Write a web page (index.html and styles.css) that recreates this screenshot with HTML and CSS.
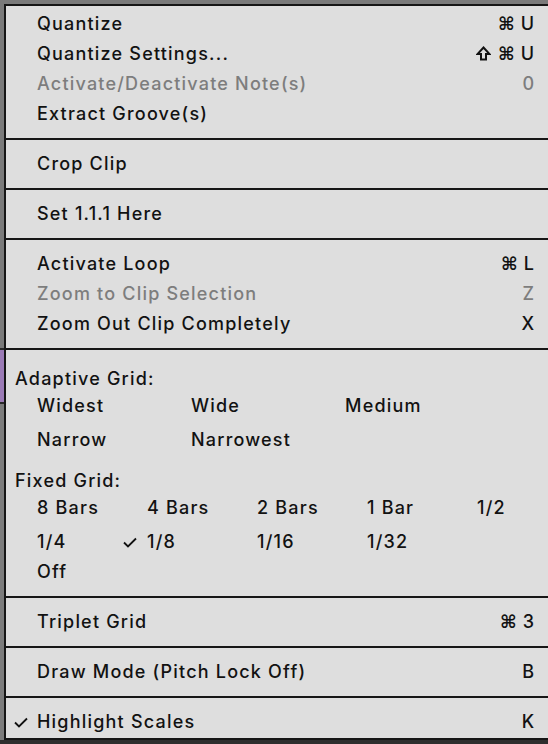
FILE: index.html
```html
<!DOCTYPE html>
<html>
<head>
<meta charset="utf-8">
<link rel="stylesheet" href="styles.css">
</head>
<body>
<div class="menu">
  <div class="item"><span class="label">Quantize</span><span class="key"><span class="sym">⌘</span>U</span></div>
  <div class="item"><span class="label">Quantize Settings...</span><span class="key"><svg class="shift" width="15" height="15" viewBox="0 0 15 15"><path d="M7.5 1.5 L13.5 8 H10 V13.5 H5 V8 H1.5 Z" fill="none" stroke="#121212" stroke-width="2" stroke-linejoin="miter"/></svg><span class="sym">⌘</span>U</span></div>
  <div class="item disabled"><span class="label">Activate/Deactivate Note(s)</span><span class="key">0</span></div>
  <div class="item"><span class="label">Extract Groove(s)</span></div>
  <div class="sep"></div>
  <div class="item"><span class="label">Crop Clip</span></div>
  <div class="sep"></div>
  <div class="item"><span class="label">Set 1.1.1 Here</span></div>
  <div class="sep"></div>
  <div class="item"><span class="label">Activate Loop</span><span class="key"><span class="sym">⌘</span>L</span></div>
  <div class="item disabled"><span class="label">Zoom to Clip Selection</span><span class="key">Z</span></div>
  <div class="item"><span class="label">Zoom Out Clip Completely</span><span class="key">X</span></div>
  <div class="sep sep-tight"></div>
  <div class="grid-section">
    <div class="heading">Adaptive Grid:</div>
    <div class="grid adaptive">
      <div class="cell">Widest</div>
      <div class="cell">Wide</div>
      <div class="cell">Medium</div>
      <div class="cell">Narrow</div>
      <div class="cell">Narrowest</div>
    </div>
    <div class="heading fixed-heading">Fixed Grid:</div>
    <div class="grid fixed">
      <div class="cell">8 Bars</div>
      <div class="cell">4 Bars</div>
      <div class="cell">2 Bars</div>
      <div class="cell">1 Bar</div>
      <div class="cell">1/2</div>
      <div class="cell">1/4</div>
      <div class="cell checked"><svg class="check" width="14" height="11" viewBox="0 0 14 11"><polyline points="1,5.5 5,9.5 13,1.5" fill="none" stroke="#111" stroke-width="1.8"/></svg>1/8</div>
      <div class="cell">1/16</div>
      <div class="cell">1/32</div>
    </div>
    <div class="cell off">Off</div>
  </div>
  <div class="sep"></div>
  <div class="item"><span class="label">Triplet Grid</span><span class="key"><span class="sym">⌘</span>3</span></div>
  <div class="sep"></div>
  <div class="item"><span class="label">Draw Mode (Pitch Lock Off)</span><span class="key">B</span></div>
  <div class="sep"></div>
  <div class="item checked"><svg class="check" width="14" height="11" viewBox="0 0 14 11"><polyline points="1,5.5 5,9.5 13,1.5" fill="none" stroke="#111" stroke-width="1.8"/></svg><span class="label">Highlight Scales</span><span class="key">K</span></div>
</div>
</body>
</html>
```
FILE: styles.css
```css
html, body {
  margin: 0;
  padding: 0;
}
body {
  width: 548px;
  height: 744px;
  overflow: hidden;
  background:
    linear-gradient(to bottom,
      #7a7a7a 0, #7a7a7a 348px,
      #2a2a2a 348px, #2a2a2a 350px,
      #9b7bb6 350px, #9b7bb6 402px,
      #2a2a2a 402px, #2a2a2a 404px,
      #7c7c7c 404px, #7c7c7c 740px,
      #2e2e2e 740px);
  font-family: Inter, "Noto Sans", sans-serif;
  font-weight: 500;
  font-size: 18px;
  letter-spacing: 1.2px;
  color: #121212;
}
.menu {
  margin: 4px 0 0 4px;
  background: #dedede;
  border-left: 2px solid #161616;
  border-top: 2px solid #161616;
  border-bottom: 2px solid #161616;
  padding: 2px 0 2px 0;
  box-sizing: border-box;
  height: 736px;
  overflow: hidden;
}
.item {
  position: relative;
  height: 30px;
  display: flex;
  align-items: center;
  padding: 0 14px 0 31px;
}
.item .label {
  flex: 1;
  white-space: nowrap;
}
.item.disabled {
  color: #7d7d7d;
}
.key {
  display: flex;
  align-items: center;
  gap: 6px;
  letter-spacing: 0;
}
.sym {
  font-family: "DejaVu Sans", sans-serif;
  font-weight: bold;
  font-size: 18px;
}
.shift {
  display: block;
  margin-right: 1px;
}
.sep {
  height: 2px;
  background: #161616;
  margin: 10px 0 8px 0;
}
.sep-tight {
  margin-bottom: 0;
}
.grid-section {
  padding: 16px 0 0 0;
}
.heading {
  height: 24px;
  display: flex;
  align-items: center;
  padding-left: 9px;
}
.fixed-heading {
  margin-top: 14px;
}
.grid {
  display: grid;
  row-gap: 4px;
  padding-left: 31px;
}
.adaptive {
  grid-template-columns: repeat(2, 154px) auto;
}
.fixed {
  grid-template-columns: repeat(4, 110px) auto;
}
.cell {
  position: relative;
  height: 30px;
  display: flex;
  align-items: center;
  white-space: nowrap;
}
.off {
  padding-left: 31px;
}
.check {
  position: absolute;
  left: -24px;
  top: 11px;
}
.item .check {
  left: 8px;
}
```
